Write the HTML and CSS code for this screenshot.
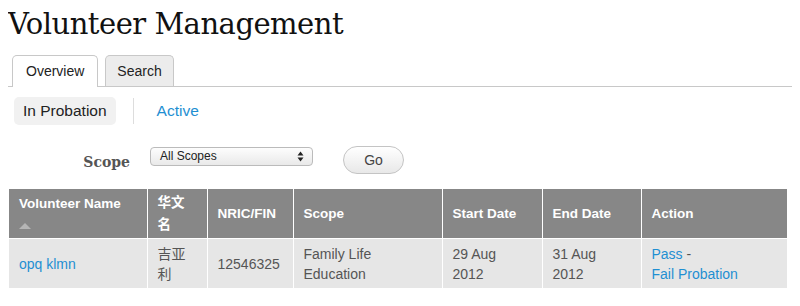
FILE: index.html
```html
<!DOCTYPE HTML>
<html>
<head>
<meta http-equiv="Content-Type" content="text/html; charset=utf-8">
<title>Volunteer Management</title>
<link rel="stylesheet" href="styles.css">
</head>
<body>

<h1 id="title">Volunteer Management</h1>

<ul class="tabs">
	<li class="tab current">Overview</li>
	<li class="tab">Search</li>
</ul>

<div class="subnav">
	<span class="pill">In Probation</span>
	<span class="sep"></span>
	<a class="link" href="#">Active</a>
</div>

<div class="filter">
	<label class="filterLabel">Scope</label>
	<div class="select">
		<span>All Scopes</span>
		<svg width="7" height="11" viewBox="0 0 7 11"><path d="M3.5 0.5 L6.5 4.5 L0.5 4.5 Z M3.5 10.5 L6.5 6.5 L0.5 6.5 Z" fill="#222"/></svg>
	</div>
	<button class="goButton">Go</button>
</div>

<table class="list">
	<colgroup>
		<col style="width:138px"><col style="width:60px"><col style="width:86px"><col style="width:149px"><col style="width:100px"><col style="width:99px"><col style="width:146px">
	</colgroup>
	<thead>
		<tr>
			<th class="sortable">Volunteer Name<br><span class="arrow"></span></th>
			<th>华文名</th>
			<th>NRIC/FIN</th>
			<th>Scope</th>
			<th>Start Date</th>
			<th>End Date</th>
			<th>Action</th>
		</tr>
	</thead>
	<tbody>
		<tr>
			<td><a class="link" href="#">opq klmn</a></td>
			<td>吉亚利</td>
			<td>12546325</td>
			<td>Family Life Education</td>
			<td>29 Aug 2012</td>
			<td>31 Aug 2012</td>
			<td><a class="link" href="#">Pass</a> -<br><a class="link" href="#">Fail Probation</a></td>
		</tr>
	</tbody>
</table>

</body>
</html>
```

FILE: styles.css
```css
body{
	margin:8px;
	font-family:"Liberation Sans", Arial, "Noto Sans CJK SC", sans-serif;
	font-size:14px;
	color:#333;
	background:white;
}

#title{
	font-family:"DejaVu Serif", Georgia, serif;
	font-weight:normal;
	font-size:29px;
	color:#111;
	margin:0;
	height:47px;
	line-height:32px;
	letter-spacing:-0.5px;
}

.tabs{
	list-style:none;
	margin:0;
	padding:0 0 0 4px;
	display:flex;
	gap:7px;
	border-bottom:1px solid #c8c8c8;
	height:31px;
}

.tab{
	border:1px solid #c8c8c8;
	border-bottom:none;
	border-radius:5px 5px 0 0;
	background:#ececec;
	padding:0 11px;
	line-height:30px;
	color:#222;
}

.tab.current{
	background:white;
	height:31px;
	padding:0 13px;
}

.subnav{
	display:flex;
	align-items:center;
	margin:10px 0 0 6px;
	height:28px;
}

.pill{
	background:#f1f1f1;
	border-radius:5px;
	padding:0 9px;
	line-height:28px;
	color:#222;
	font-size:15.5px;
}

.sep{
	width:1px;
	height:26px;
	background:#ddd;
	margin:0 23px 0 17px;
}

.link{
	color:#1f8fd2;
	text-decoration:none;
}

.subnav .link{
	font-size:15.5px;
}

.filter{
	display:flex;
	align-items:center;
	margin:21px 0 0 0;
	height:28px;
}

.filterLabel{
	font-family:"DejaVu Serif", Georgia, serif;
	font-weight:bold;
	font-size:14px;
	color:#555;
	width:122px;
	text-align:right;
	margin-top:4px;
}

.select{
	margin-left:20px;
	height:17px;
	border:1px solid #bbb;
	border-radius:4px;
	background:linear-gradient(#fdfdfd, #e9e9e9);
	display:flex;
	align-items:center;
	justify-content:space-between;
	padding:0 8px 0 9px;
	margin-top:-8px;
	font-size:12px;
	color:#222;
	width:144px;
}

.goButton{
	margin-left:30px;
	width:61px;
	height:28px;
	border:1px solid #c4c4c4;
	border-radius:14px;
	background:linear-gradient(#ffffff, #e8e8e8);
	font-family:"Liberation Sans", Arial, sans-serif;
	font-size:14px;
	color:#444;
}

.list{
	margin:15px 0 0 1px;
	border-collapse:collapse;
	table-layout:fixed;
	width:778px;
	font-size:14px;
}

.list th{
	background:#878787;
	color:white;
	text-align:left;
	font-weight:bold;
	font-size:13.5px;
	height:46px;
	padding:0 10px;
	line-height:22px;
	border:1px solid white;
	border-top:none;
	vertical-align:middle;
}

.list th.sortable{
	padding-top:3px;
}

.list td{
	background:#e6e6e6;
	color:#555;
	height:49px;
	padding:0 12px 0 10px;
	line-height:20px;
	border:1px solid white;
	border-bottom:none;
	vertical-align:middle;
}

.list tr > :first-child{
	border-left:none;
}

.list tr > :last-child{
	border-right:none;
}

.arrow{
	display:inline-block;
	width:0;
	height:0;
	border-left:6px solid transparent;
	border-right:6px solid transparent;
	border-bottom:6px solid #b5b5b5;
	vertical-align:middle;
}
```
